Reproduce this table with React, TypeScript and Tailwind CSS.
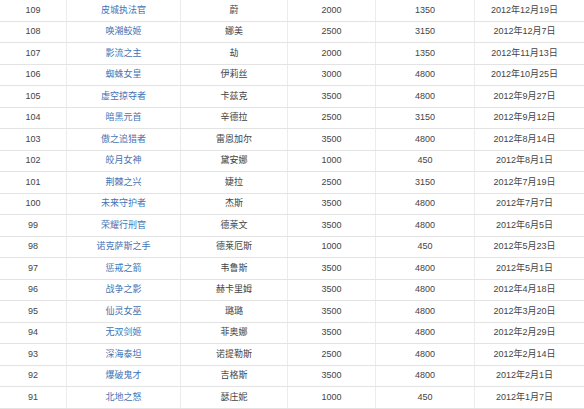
// Champion release list — plain bordered table, link-coloured titles.
type Row = [number, string, string, number, number, string];

const ROWS: Row[] = [
  [109, '皮城执法官', '蔚', 2000, 1350, '2012年12月19日'],
  [108, '唤潮鲛姬', '娜美', 2500, 3150, '2012年12月7日'],
  [107, '影流之主', '劫', 2000, 1350, '2012年11月13日'],
  [106, '蜘蛛女皇', '伊莉丝', 3000, 4800, '2012年10月25日'],
  [105, '虚空掠夺者', '卡兹克', 3500, 4800, '2012年9月27日'],
  [104, '暗黑元首', '辛德拉', 2500, 3150, '2012年9月12日'],
  [103, '傲之追猎者', '雷恩加尔', 3500, 4800, '2012年8月14日'],
  [102, '皎月女神', '黛安娜', 1000, 450, '2012年8月1日'],
  [101, '荆棘之兴', '婕拉', 2500, 3150, '2012年7月19日'],
  [100, '未来守护者', '杰斯', 3500, 4800, '2012年7月7日'],
  [99, '荣耀行刑官', '德莱文', 3500, 4800, '2012年6月5日'],
  [98, '诺克萨斯之手', '德莱厄斯', 1000, 450, '2012年5月23日'],
  [97, '惩戒之箭', '韦鲁斯', 3500, 4800, '2012年5月1日'],
  [96, '战争之影', '赫卡里姆', 3500, 4800, '2012年4月18日'],
  [95, '仙灵女巫', '璐璐', 3500, 4800, '2012年3月20日'],
  [94, '无双剑姬', '菲奥娜', 3500, 4800, '2012年2月29日'],
  [93, '深海泰坦', '诺提勒斯', 2500, 4800, '2012年2月14日'],
  [92, '爆破鬼才', '吉格斯', 3500, 4800, '2012年2月1日'],
  [91, '北地之怒', '瑟庄妮', 1000, 450, '2012年1月7日'],
];

const cell = 'flex items-center justify-center border-l border-[#ececec] first:border-l-0';

export default function App() {
  return (
    <div
      className="w-[584px] h-[409px] overflow-hidden bg-white text-[9px] text-[#444]"
      style={{ fontFamily: '"Liberation Sans", Arial, "Noto Sans CJK SC", sans-serif' }}
    >
      {ROWS.map(([id, title, name, ip, rp, date]) => (
        <div
          key={id}
          className="grid grid-cols-[66px_114px_107px_88px_99px_100px_1fr] h-[21.5px] border-b border-[#e3e3e3]"
        >
          <div className={cell}>{id}</div>
          <div className={`${cell} text-[#3f74b5]`}>{title}</div>
          <div className={cell}>{name}</div>
          <div className={cell}>{ip}</div>
          <div className={cell}>{rp}</div>
          <div className={cell}>{date}</div>
          <div />
        </div>
      ))}
    </div>
  );
}
